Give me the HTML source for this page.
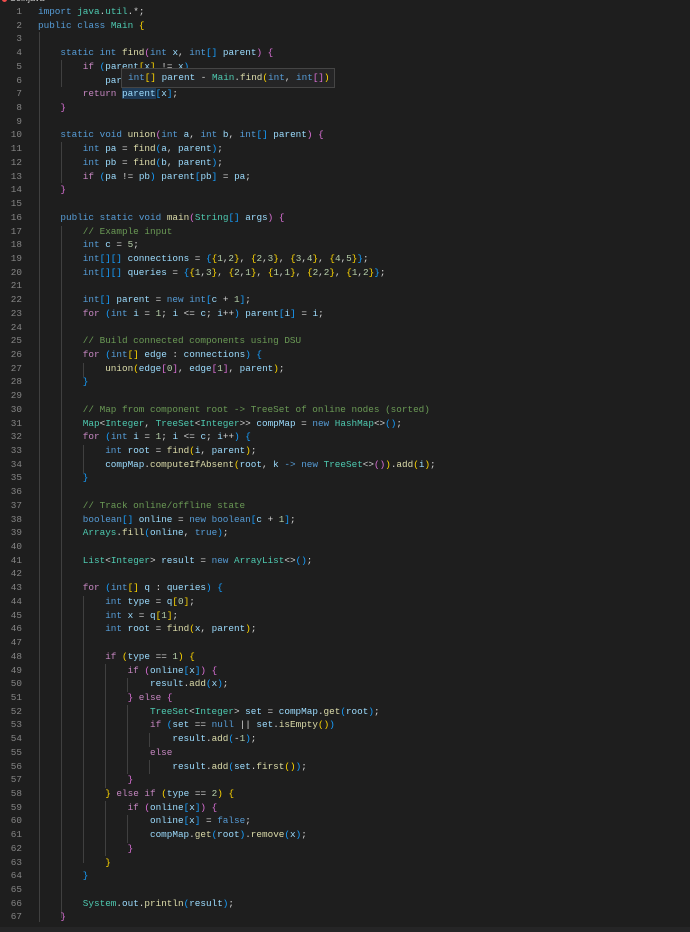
<!DOCTYPE html>
<html><head><meta charset="utf-8"><style>
html,body{margin:0;padding:0;background:#1e1e1e;width:690px;height:932px;overflow:hidden}
#ed{position:absolute;left:0;top:5px;font-family:"Liberation Mono",monospace;font-size:9.33px;color:#d4d4d4}
.l{height:13.73px;line-height:13.73px;white-space:pre;position:relative}
.n{position:absolute;left:0;width:22px;text-align:right;color:#858585}
.c{position:absolute;left:38px}
.k{color:#569cd6}.p{color:#c586c0}.t{color:#4ec9b0}.f{color:#dcdcaa}.v{color:#9cdcfe}.u{color:#b5cea8}.m{color:#6a9955}
.b1{color:#ffd700}.b2{color:#da70d6}.b3{color:#179fff}
#tip{position:absolute;left:121px;top:68px;width:214px;height:20px;background:#252526;border:1px solid #454545;font-family:"Liberation Mono",monospace;font-size:9.33px;line-height:18px;color:#d4d4d4;padding-left:6px;box-sizing:border-box;white-space:pre}
.g{position:absolute;width:1px;background:#404040}
#bot{position:absolute;left:0;top:927px;width:690px;height:5px;background:#252526}
</style></head><body>
<div style="position:absolute;left:2px;top:-3px;width:5px;height:5px;border-radius:50%;background:#f14c4c"></div>
<div style="position:absolute;left:10px;top:-7px;font:9px 'Liberation Sans',sans-serif;color:#ccc">Solr.java</div>
<div class="g" style="left:39px;top:32px;height:890px"></div>
<div class="g" style="left:61px;top:60px;height:27px"></div>
<div class="g" style="left:61px;top:142px;height:41px"></div>
<div class="g" style="left:61px;top:226px;height:692px"></div>
<div class="g" style="left:83px;top:363px;height:14px"></div>
<div class="g" style="left:83px;top:445px;height:28px"></div>
<div class="g" style="left:83px;top:596px;height:267px"></div>
<div class="g" style="left:105px;top:664px;height:124px"></div>
<div class="g" style="left:105px;top:801px;height:55px"></div>
<div class="g" style="left:127px;top:678px;height:14px"></div>
<div class="g" style="left:127px;top:705px;height:69px"></div>
<div class="g" style="left:127px;top:815px;height:28px"></div>
<div class="g" style="left:149px;top:733px;height:14px"></div>
<div class="g" style="left:149px;top:760px;height:14px"></div>
<div id="ed">
<div class="l"><span class="n">1</span><span class="c"><span class="k">import</span> <span class="t">java</span>.<span class="t">util</span>.*;</span></div>
<div class="l"><span class="n">2</span><span class="c"><span class="k">public</span> <span class="k">class</span> <span class="t">Main</span> <span class="b1">{</span></span></div>
<div class="l"><span class="n">3</span></div>
<div class="l"><span class="n">4</span><span class="c">    <span class="k">static</span> <span class="k">int</span> <span class="f">find</span><span class="b2">(</span><span class="k">int</span> <span class="v">x</span>, <span class="k">int</span><span class="b3">[]</span> <span class="v">parent</span><span class="b2">)</span> <span class="b2">{</span></span></div>
<div class="l"><span class="n">5</span><span class="c">        <span class="p">if</span> <span class="b3">(</span><span class="v">parent</span><span class="b1">[</span><span class="v">x</span><span class="b1">]</span> != <span class="v">x</span><span class="b3">)</span></span></div>
<div class="l"><span class="n">6</span><span class="c">            <span class="v">parent</span><span class="b3">[</span><span class="v">x</span><span class="b3">]</span> = <span class="f">find</span><span class="b3">(</span><span class="v">parent</span>, <span class="v">parent</span><span class="b3">)</span>;</span></div>
<div class="l"><span class="n">7</span><span class="c">        <span class="p">return</span> <span class="v" style="background:#1f3a55">parent</span><span class="b3">[</span><span class="v">x</span><span class="b3">]</span>;</span></div>
<div class="l"><span class="n">8</span><span class="c">    <span class="b2">}</span></span></div>
<div class="l"><span class="n">9</span></div>
<div class="l"><span class="n">10</span><span class="c">    <span class="k">static</span> <span class="k">void</span> <span class="f">union</span><span class="b2">(</span><span class="k">int</span> <span class="v">a</span>, <span class="k">int</span> <span class="v">b</span>, <span class="k">int</span><span class="b3">[]</span> <span class="v">parent</span><span class="b2">)</span> <span class="b2">{</span></span></div>
<div class="l"><span class="n">11</span><span class="c">        <span class="k">int</span> <span class="v">pa</span> = <span class="f">find</span><span class="b3">(</span><span class="v">a</span>, <span class="v">parent</span><span class="b3">)</span>;</span></div>
<div class="l"><span class="n">12</span><span class="c">        <span class="k">int</span> <span class="v">pb</span> = <span class="f">find</span><span class="b3">(</span><span class="v">b</span>, <span class="v">parent</span><span class="b3">)</span>;</span></div>
<div class="l"><span class="n">13</span><span class="c">        <span class="p">if</span> <span class="b3">(</span><span class="v">pa</span> != <span class="v">pb</span><span class="b3">)</span> <span class="v">parent</span><span class="b3">[</span><span class="v">pb</span><span class="b3">]</span> = <span class="v">pa</span>;</span></div>
<div class="l"><span class="n">14</span><span class="c">    <span class="b2">}</span></span></div>
<div class="l"><span class="n">15</span></div>
<div class="l"><span class="n">16</span><span class="c">    <span class="k">public</span> <span class="k">static</span> <span class="k">void</span> <span class="f">main</span><span class="b2">(</span><span class="t">String</span><span class="b3">[]</span> <span class="v">args</span><span class="b2">)</span> <span class="b2">{</span></span></div>
<div class="l"><span class="n">17</span><span class="c">        <span class="m">// Example input</span></span></div>
<div class="l"><span class="n">18</span><span class="c">        <span class="k">int</span> <span class="v">c</span> = <span class="u">5</span>;</span></div>
<div class="l"><span class="n">19</span><span class="c">        <span class="k">int</span><span class="b3">[][]</span> <span class="v">connections</span> = <span class="b3">{</span><span class="b1">{</span><span class="u">1</span>,<span class="u">2</span><span class="b1">}</span>, <span class="b1">{</span><span class="u">2</span>,<span class="u">3</span><span class="b1">}</span>, <span class="b1">{</span><span class="u">3</span>,<span class="u">4</span><span class="b1">}</span>, <span class="b1">{</span><span class="u">4</span>,<span class="u">5</span><span class="b1">}</span><span class="b3">}</span>;</span></div>
<div class="l"><span class="n">20</span><span class="c">        <span class="k">int</span><span class="b3">[][]</span> <span class="v">queries</span> = <span class="b3">{</span><span class="b1">{</span><span class="u">1</span>,<span class="u">3</span><span class="b1">}</span>, <span class="b1">{</span><span class="u">2</span>,<span class="u">1</span><span class="b1">}</span>, <span class="b1">{</span><span class="u">1</span>,<span class="u">1</span><span class="b1">}</span>, <span class="b1">{</span><span class="u">2</span>,<span class="u">2</span><span class="b1">}</span>, <span class="b1">{</span><span class="u">1</span>,<span class="u">2</span><span class="b1">}</span><span class="b3">}</span>;</span></div>
<div class="l"><span class="n">21</span></div>
<div class="l"><span class="n">22</span><span class="c">        <span class="k">int</span><span class="b3">[]</span> <span class="v">parent</span> = <span class="k">new</span> <span class="k">int</span><span class="b3">[</span><span class="v">c</span> + <span class="u">1</span><span class="b3">]</span>;</span></div>
<div class="l"><span class="n">23</span><span class="c">        <span class="p">for</span> <span class="b3">(</span><span class="k">int</span> <span class="v">i</span> = <span class="u">1</span>; <span class="v">i</span> &lt;= <span class="v">c</span>; <span class="v">i</span>++<span class="b3">)</span> <span class="v">parent</span><span class="b3">[</span><span class="v">i</span><span class="b3">]</span> = <span class="v">i</span>;</span></div>
<div class="l"><span class="n">24</span></div>
<div class="l"><span class="n">25</span><span class="c">        <span class="m">// Build connected components using DSU</span></span></div>
<div class="l"><span class="n">26</span><span class="c">        <span class="p">for</span> <span class="b3">(</span><span class="k">int</span><span class="b1">[]</span> <span class="v">edge</span> : <span class="v">connections</span><span class="b3">)</span> <span class="b3">{</span></span></div>
<div class="l"><span class="n">27</span><span class="c">            <span class="f">union</span><span class="b1">(</span><span class="v">edge</span><span class="b2">[</span><span class="u">0</span><span class="b2">]</span>, <span class="v">edge</span><span class="b2">[</span><span class="u">1</span><span class="b2">]</span>, <span class="v">parent</span><span class="b1">)</span>;</span></div>
<div class="l"><span class="n">28</span><span class="c">        <span class="b3">}</span></span></div>
<div class="l"><span class="n">29</span></div>
<div class="l"><span class="n">30</span><span class="c">        <span class="m">// Map from component root -&gt; TreeSet of online nodes (sorted)</span></span></div>
<div class="l"><span class="n">31</span><span class="c">        <span class="t">Map</span>&lt;<span class="t">Integer</span>, <span class="t">TreeSet</span>&lt;<span class="t">Integer</span>&gt;&gt; <span class="v">compMap</span> = <span class="k">new</span> <span class="t">HashMap</span>&lt;&gt;<span class="b3">()</span>;</span></div>
<div class="l"><span class="n">32</span><span class="c">        <span class="p">for</span> <span class="b3">(</span><span class="k">int</span> <span class="v">i</span> = <span class="u">1</span>; <span class="v">i</span> &lt;= <span class="v">c</span>; <span class="v">i</span>++<span class="b3">)</span> <span class="b3">{</span></span></div>
<div class="l"><span class="n">33</span><span class="c">            <span class="k">int</span> <span class="v">root</span> = <span class="f">find</span><span class="b1">(</span><span class="v">i</span>, <span class="v">parent</span><span class="b1">)</span>;</span></div>
<div class="l"><span class="n">34</span><span class="c">            <span class="v">compMap</span>.<span class="f">computeIfAbsent</span><span class="b1">(</span><span class="v">root</span>, <span class="v">k</span> <span class="k">-&gt;</span> <span class="k">new</span> <span class="t">TreeSet</span>&lt;&gt;<span class="b2">()</span><span class="b1">)</span>.<span class="f">add</span><span class="b1">(</span><span class="v">i</span><span class="b1">)</span>;</span></div>
<div class="l"><span class="n">35</span><span class="c">        <span class="b3">}</span></span></div>
<div class="l"><span class="n">36</span></div>
<div class="l"><span class="n">37</span><span class="c">        <span class="m">// Track online/offline state</span></span></div>
<div class="l"><span class="n">38</span><span class="c">        <span class="k">boolean</span><span class="b3">[]</span> <span class="v">online</span> = <span class="k">new</span> <span class="k">boolean</span><span class="b3">[</span><span class="v">c</span> + <span class="u">1</span><span class="b3">]</span>;</span></div>
<div class="l"><span class="n">39</span><span class="c">        <span class="t">Arrays</span>.<span class="f">fill</span><span class="b3">(</span><span class="v">online</span>, <span class="k">true</span><span class="b3">)</span>;</span></div>
<div class="l"><span class="n">40</span></div>
<div class="l"><span class="n">41</span><span class="c">        <span class="t">List</span>&lt;<span class="t">Integer</span>&gt; <span class="v">result</span> = <span class="k">new</span> <span class="t">ArrayList</span>&lt;&gt;<span class="b3">()</span>;</span></div>
<div class="l"><span class="n">42</span></div>
<div class="l"><span class="n">43</span><span class="c">        <span class="p">for</span> <span class="b3">(</span><span class="k">int</span><span class="b1">[]</span> <span class="v">q</span> : <span class="v">queries</span><span class="b3">)</span> <span class="b3">{</span></span></div>
<div class="l"><span class="n">44</span><span class="c">            <span class="k">int</span> <span class="v">type</span> = <span class="v">q</span><span class="b1">[</span><span class="u">0</span><span class="b1">]</span>;</span></div>
<div class="l"><span class="n">45</span><span class="c">            <span class="k">int</span> <span class="v">x</span> = <span class="v">q</span><span class="b1">[</span><span class="u">1</span><span class="b1">]</span>;</span></div>
<div class="l"><span class="n">46</span><span class="c">            <span class="k">int</span> <span class="v">root</span> = <span class="f">find</span><span class="b1">(</span><span class="v">x</span>, <span class="v">parent</span><span class="b1">)</span>;</span></div>
<div class="l"><span class="n">47</span></div>
<div class="l"><span class="n">48</span><span class="c">            <span class="p">if</span> <span class="b1">(</span><span class="v">type</span> == <span class="u">1</span><span class="b1">)</span> <span class="b1">{</span></span></div>
<div class="l"><span class="n">49</span><span class="c">                <span class="p">if</span> <span class="b2">(</span><span class="v">online</span><span class="b3">[</span><span class="v">x</span><span class="b3">]</span><span class="b2">)</span> <span class="b2">{</span></span></div>
<div class="l"><span class="n">50</span><span class="c">                    <span class="v">result</span>.<span class="f">add</span><span class="b3">(</span><span class="v">x</span><span class="b3">)</span>;</span></div>
<div class="l"><span class="n">51</span><span class="c">                <span class="b2">}</span> <span class="p">else</span> <span class="b2">{</span></span></div>
<div class="l"><span class="n">52</span><span class="c">                    <span class="t">TreeSet</span>&lt;<span class="t">Integer</span>&gt; <span class="v">set</span> = <span class="v">compMap</span>.<span class="f">get</span><span class="b3">(</span><span class="v">root</span><span class="b3">)</span>;</span></div>
<div class="l"><span class="n">53</span><span class="c">                    <span class="p">if</span> <span class="b3">(</span><span class="v">set</span> == <span class="k">null</span> || <span class="v">set</span>.<span class="f">isEmpty</span><span class="b1">()</span><span class="b3">)</span></span></div>
<div class="l"><span class="n">54</span><span class="c">                        <span class="v">result</span>.<span class="f">add</span><span class="b3">(</span>-<span class="u">1</span><span class="b3">)</span>;</span></div>
<div class="l"><span class="n">55</span><span class="c">                    <span class="p">else</span></span></div>
<div class="l"><span class="n">56</span><span class="c">                        <span class="v">result</span>.<span class="f">add</span><span class="b3">(</span><span class="v">set</span>.<span class="f">first</span><span class="b1">()</span><span class="b3">)</span>;</span></div>
<div class="l"><span class="n">57</span><span class="c">                <span class="b2">}</span></span></div>
<div class="l"><span class="n">58</span><span class="c">            <span class="b1">}</span> <span class="p">else</span> <span class="p">if</span> <span class="b1">(</span><span class="v">type</span> == <span class="u">2</span><span class="b1">)</span> <span class="b1">{</span></span></div>
<div class="l"><span class="n">59</span><span class="c">                <span class="p">if</span> <span class="b2">(</span><span class="v">online</span><span class="b3">[</span><span class="v">x</span><span class="b3">]</span><span class="b2">)</span> <span class="b2">{</span></span></div>
<div class="l"><span class="n">60</span><span class="c">                    <span class="v">online</span><span class="b3">[</span><span class="v">x</span><span class="b3">]</span> = <span class="k">false</span>;</span></div>
<div class="l"><span class="n">61</span><span class="c">                    <span class="v">compMap</span>.<span class="f">get</span><span class="b3">(</span><span class="v">root</span><span class="b3">)</span>.<span class="f">remove</span><span class="b3">(</span><span class="v">x</span><span class="b3">)</span>;</span></div>
<div class="l"><span class="n">62</span><span class="c">                <span class="b2">}</span></span></div>
<div class="l"><span class="n">63</span><span class="c">            <span class="b1">}</span></span></div>
<div class="l"><span class="n">64</span><span class="c">        <span class="b3">}</span></span></div>
<div class="l"><span class="n">65</span></div>
<div class="l"><span class="n">66</span><span class="c">        <span class="t">System</span>.<span class="v">out</span>.<span class="f">println</span><span class="b3">(</span><span class="v">result</span><span class="b3">)</span>;</span></div>
<div class="l"><span class="n">67</span><span class="c">    <span class="b2">}</span></span></div>
</div>
<div id="tip"><span class="k">int</span><span class="b1">[]</span> <span class="v">parent</span> - <span class="t">Main</span>.<span class="f">find</span><span class="b1">(</span><span class="k">int</span>, <span class="k">int</span><span class="b2">[]</span><span class="b1">)</span></div>
<div id="bot"></div>
</body></html>
